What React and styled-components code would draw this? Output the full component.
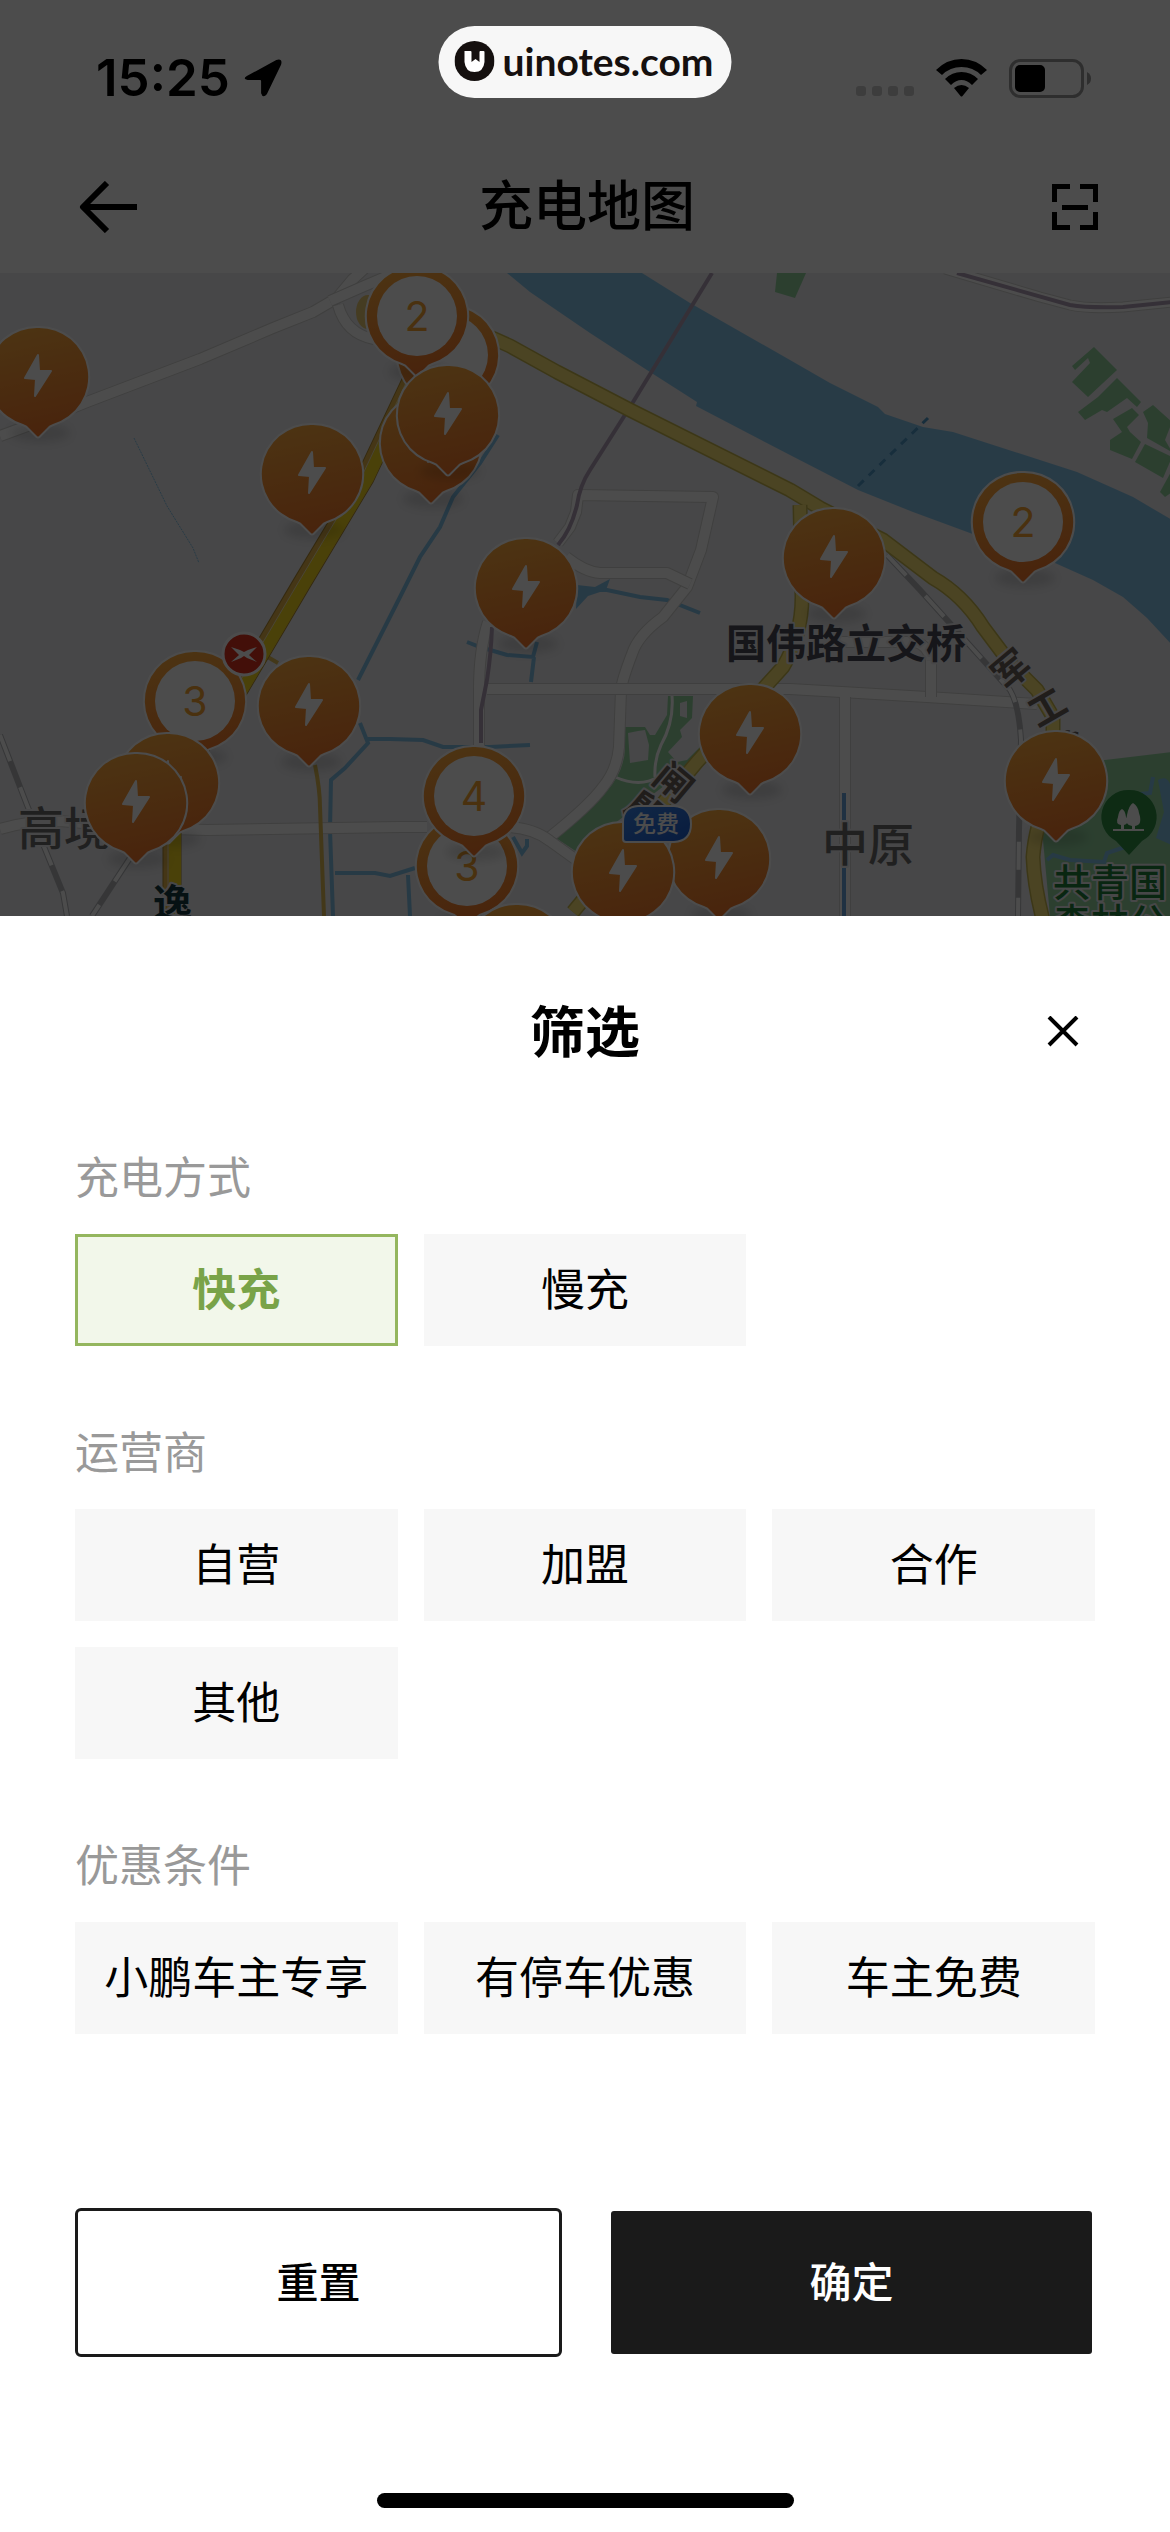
import React, { useState } from 'react';
import styled, { createGlobalStyle } from 'styled-components';

const GlobalStyle = createGlobalStyle`
  * {
    box-sizing: border-box;
  }

  body {
    margin: 0;
    background: #fff;
    color: #000;
    font-family: Inter, "Noto Sans CJK SC", sans-serif;
  }

  button {
    font-family: inherit;
    cursor: pointer;
  }
`;

const Screen = styled.div`
  min-height: 100vh;
  display: flex;
  flex-direction: column;
`;

const Scene = styled.div`
  position: relative;
  flex: 1;
  min-height: 600px;
  display: flex;
  flex-direction: column;
`;

const Dimmer = styled.div`
  position: absolute;
  inset: 0;
  background: rgba(0, 0, 0, 0.7);
`;

const StatusBar = styled.div`
  height: 141px;
  padding: 15px 78px 0 96px;
  display: flex;
  align-items: center;
  justify-content: space-between;
`;

const Clock = styled.div`
  display: flex;
  align-items: center;
  gap: 14px;
  font-size: 51px;
  line-height: 60px;
  font-weight: 600;
`;

const StatusIcons = styled.div`
  display: flex;
  align-items: center;
  gap: 22px;
`;

const SiteBadge = styled.div`
  position: absolute;
  top: 26px;
  left: 50%;
  transform: translateX(-50%);
  height: 72px;
  padding: 0 18px 2px 16px;
  border-radius: 36px;
  background: #f7f7f7;
  color: #15100f;
  display: flex;
  align-items: center;
  gap: 8px;
  font-family: Lato, sans-serif;
  font-size: 39px;
  font-weight: 700;
`;

const NavBar = styled.header`
  height: 132px;
  padding: 0 72px 0 76px;
  display: grid;
  grid-template-columns: 64px 1fr 64px;
  align-items: center;
`;

const NavTitle = styled.h1`
  margin: 0;
  text-align: center;
  font-size: 54px;
  line-height: 64px;
  font-weight: 500;
`;

const IconButton = styled.button`
  display: flex;
  align-items: center;
  justify-content: ${(props) => props.$align || 'center'};
  width: 64px;
  height: 64px;
  padding: 0;
  border: none;
  background: none;
  color: #000;
`;

const MapArea = styled.div`
  flex: 1;
  min-height: 0;
  overflow: hidden;
  background: #ededf0;

  svg {
    display: block;
    width: 100%;
    height: 100%;
  }
`;

const Sheet = styled.section`
  background: #fff;
  padding: 76px 75px 24px;
`;

const SheetHeader = styled.div`
  display: grid;
  grid-template-columns: 64px 1fr 64px;
  align-items: center;
  height: 80px;
  margin-bottom: 78px;
`;

const SheetTitle = styled.h2`
  grid-column: 2;
  margin: 0;
  text-align: center;
  font-size: 55px;
  line-height: 80px;
  font-weight: 700;
`;

const Groups = styled.div`
  display: flex;
  flex-direction: column;
  gap: 79px;
`;

const GroupLabel = styled.h3`
  margin: 0 0 28px;
  color: #999;
  font-size: 44px;
  line-height: 56px;
  font-weight: 400;
`;

const ChipGrid = styled.div`
  display: grid;
  grid-template-columns: repeat(3, 1fr);
  gap: 26px;
`;

const Chip = styled.button`
  height: 112px;
  padding: 0;
  border: 3px solid ${(props) => (props.$active ? '#94b65e' : '#f7f7f7')};
  background: ${(props) => (props.$active ? '#f2f7ea' : '#f7f7f7')};
  color: ${(props) => (props.$active ? '#79a348' : '#000')};
  font-size: 44px;
  line-height: 56px;
  font-weight: ${(props) => (props.$active ? 700 : 400)};
  white-space: nowrap;
`;

const Actions = styled.div`
  display: grid;
  grid-template-columns: 1fr 1fr;
  gap: 46px;
  margin-top: 174px;
`;

const ActionButton = styled.button`
  height: 149px;
  padding: 0;
  border: 3px solid ${(props) => (props.$primary ? 'transparent' : '#1a1a1a')};
  border-radius: 6px;
  background: ${(props) => (props.$primary ? '#1a1a1a' : '#fff')};
  background-clip: padding-box;
  color: ${(props) => (props.$primary ? '#fff' : '#000')};
  font-size: 42px;
  line-height: 56px;
  font-weight: 500;
`;

const HomeIndicator = styled.div`
  width: 417px;
  max-width: 60%;
  height: 15px;
  margin: 136px auto 0;
  border-radius: 8px;
  background: #000;
`;

const groups = [
  { key: 'mode', label: '充电方式', options: ['快充', '慢充'] },
  { key: 'operator', label: '运营商', options: ['自营', '加盟', '合作', '其他'] },
  { key: 'discount', label: '优惠条件', options: ['小鹏车主专享', '有停车优惠', '车主免费'] },
];

// drawn back to front
const pins = [
  { x: 38, y: 377 },
  { x: 312, y: 474 },
  { x: 448, y: 355, count: ' ' },
  { x: 431, y: 443 },
  { x: 417, y: 316, count: '2' },
  { x: 448, y: 415 },
  { x: 526, y: 588 },
  { x: 834, y: 558 },
  { x: 1023, y: 522, count: '2' },
  { x: 195, y: 701, count: '3' },
  { x: 309, y: 706 },
  { x: 168, y: 783 },
  { x: 136, y: 803 },
  { x: 467, y: 866, count: '3' },
  { x: 474, y: 796, count: '4' },
  { x: 517, y: 954 },
  { x: 750, y: 734 },
  { x: 719, y: 859 },
  { x: 623, y: 872 },
  { x: 1056, y: 781 },
];

const Pin = ({ x, y, count }) => (
  <g transform={`translate(${x} ${y})`}>
    <ellipse cx="2" cy="56" rx="30" ry="9" fill="#000" opacity="0.12" filter="url(#soft)" />
    <path
      d="M0 -49A49 49 0 0 1 15 47Q11 48 8 52L1 59Q0 60 -1 59L-8 52Q-11 48 -15 47A49 49 0 0 1 0 -49Z"
      fill="url(#pinFill)"
      stroke="#fff"
      strokeWidth="4"
      paintOrder="stroke"
    />
    {count ? (
      <>
        <circle r="40" fill="#fff" />
        <text y="15" textAnchor="middle" fontSize="41" fill="#f7a532">{count}</text>
      </>
    ) : (
      <path
        d="M0 -22L1 -6H13L-3 19L-2 2L-13 1Z"
        fill="#fff"
        stroke="#fff"
        strokeWidth="2"
        strokeLinejoin="round"
      />
    )}
  </g>
);

const Road = ({ d, width = 10 }) => (
  <>
    <path d={d} fill="none" stroke="#d4d4d2" strokeWidth={width + 2} strokeLinejoin="round" />
    <path d={d} fill="none" stroke="#fff" strokeWidth={width} strokeLinejoin="round" />
  </>
);

const YellowRoad = ({ d }) => (
  <>
    <path d={d} fill="none" stroke="#c9b84e" strokeWidth="15" strokeLinejoin="round" />
    <path d={d} fill="none" stroke="#fbe477" strokeWidth="12" strokeLinejoin="round" />
  </>
);

const Highway = ({ d }) => (
  <>
    <path d={d} fill="none" stroke="#b08a33" strokeWidth="19" />
    <path d={d} fill="none" stroke="#e8b64c" strokeWidth="17" />
    <path d={d} fill="none" stroke="#f7d91f" strokeWidth="12" transform="translate(3 0)" />
    <path d={d} fill="none" stroke="#f3e6b0" strokeWidth="1" transform="translate(-4 0)" />
  </>
);

const Rail = ({ d }) => (
  <>
    <path d={d} fill="none" stroke="#b4b6ba" strokeWidth="6" />
    <path d={d} fill="none" stroke="#fff" strokeWidth="4" strokeDasharray="28 28" />
  </>
);

const roads = [
  'M0 436L30 425L87 402L200 359L273 328L313 312L337 298L352 280L365 268',
  'M330 301L362 287L395 273',
  'M338 305Q346 334 374 339',
  'M558 543L570 527L576 512L578 495L713 497L701 550L687 587L663 617Q638 635 632 654Q622 680 621 690L619 747Q617 770 603 787Q590 805 550 837',
  'M566 557Q585 572 600 573H667L690 584',
  'M488 622Q479 650 479 690V750',
  'M487 689H790L927 697L1037 704',
  'M845 697V916',
  'M931 640V697',
  'M840 642H915Q928 645 931 660',
  'M0 829Q25 821 60 821L140 828L207 830L400 827H427',
  'M510 827Q535 829 550 841L575 859',
];

const greens = [
  'M777 273H806L795 298L775 292Z',
  'M1094 347L1117 370L1088 397L1072 382L1090 363L1088 358L1075 370L1072 366Z',
  'M1117 378L1141 402L1137 407L1127 398L1107 412L1102 410L1085 420L1078 412L1098 397Z',
  'M1132 408L1139 415L1127 427L1130 432L1141 442L1132 459L1110 450V440L1122 432L1113 419Z',
  'M1153 405L1172 422L1165 440L1172 452L1147 438L1148 423L1143 412Z',
  'M1145 444L1172 457L1163 478L1135 462Z',
  'M1172 470L1160 492L1165 497L1172 492Z',
  'M625 727H645L650 735H655L667 715L668 696H693L692 718L680 730L682 737L668 752L677 762L687 760L700 747L706 754L577 852L556 838Q600 805 617 777Q625 762 625 747Z',
  'M1045 765L1105 760L1172 752V916H1050L1043 840Z',
];

const streams = [
  'M498 435L480 463L453 497L440 527L420 557L400 597L358 680',
  'M360 723L368 743L345 768L331 780L330 830L333 916',
  'M368 739H390L423 740L443 747H490L530 745',
  'M335 873H375L390 876L415 868M408 875L410 916',
  'M577 602L590 590L607 590L640 597L667 600L700 613',
  'M467 642L480 647L507 655L533 657L537 642M534 657L531 682',
  'M513 837L522 853L527 846V839',
  'M1047 860L1053 855L1070 860L1104 862L1107 853L1125 847M1153 777L1150 793L1120 796',
];

const ChargeMap = () => (
  <svg
    viewBox="0 273 1170 643"
    preserveAspectRatio="xMidYMin slice"
    fontFamily='Inter, "Noto Sans CJK SC", sans-serif'
    role="img"
    aria-label="充电地图"
  >
    <defs>
      <linearGradient id="pinFill" x1="0.4" y1="0" x2="0.6" y2="1">
        <stop offset="0" stopColor="#ffac3f" />
        <stop offset="1" stopColor="#f4772b" />
      </linearGradient>
      <linearGradient id="freeFill" x1="0" y1="0" x2="1" y2="1">
        <stop offset="0" stopColor="#3a86ea" />
        <stop offset="1" stopColor="#1d5cd0" />
      </linearGradient>
      <filter id="soft" x="-50%" y="-100%" width="200%" height="300%">
        <feGaussianBlur stdDeviation="5" />
      </filter>
    </defs>

    {greens.map((d) => <path key={d} d={d} fill="#93d49f" />)}
    <path d="M628 733L638 731L645 730L649 745L648 760L630 763Z M680 703L687 701V718L680 716Z" fill="#ededf0" />
    <path d="M672 696Q674 722 661 745Q654 760 655 777M615 777Q640 788 658 777" fill="none" stroke="#fff" strokeWidth="3" />
    <path
      d="M507 273L530 292L590 333L650 372L697 402L696 406L790 455L858 490L913 512L970 533L1055 563L1093 580L1123 597L1147 618L1172 645V520L1133 497L1077 472L953 432L923 427L885 414L878 407L830 383L790 360L690 303L642 273Z"
      fill="#88c6ec"
    />
    <path d="M858 486L928 418" stroke="#4f99c9" strokeWidth="3" strokeDasharray="8 7" />
    <path d="M134 438L167 506L193 548L199 563" fill="none" stroke="#88c6ec" strokeWidth="1" strokeDasharray="2 1" />
    {streams.map((d) => <path key={d} d={d} fill="none" stroke="#82c1e8" strokeWidth="4" />)}
    <path d="M577 585L595 587L610 579L606 590L588 596L576 609Z M1158 780Q1172 772 1172 800V845L1156 838L1164 812Z" fill="#82c1e8" />

    {roads.map((d) => <Road key={d} d={d} />)}
    <path d="M844 793V820M844 868V916" stroke="#6aa4dc" strokeWidth="4" />

    <Road d="M945 269L1040 297L1070 305Q1087 309 1123 307L1172 302" width={9} />
    <path
      d="M712 273L630 407L590 470Q580 485 577 505Q571 530 558 545M492 627Q491 655 487 680L481 710V743M957 273L1070 305Q1087 308 1123 307L1172 302"
      fill="none"
      stroke="#b3a0b9"
      strokeWidth="4"
    />

    <Rail d="M887 555L920 590L947 620L1010 690Q1019 705 1021 740L1019 830L1018 916" />
    <Rail d="M0 735L27 805L63 893L67 916" />
    <Rail d="M130 858L92 916" />
    <path d="M315 765Q320 790 320 807L324 916M266 656L278 663" fill="none" stroke="#dfbd55" strokeWidth="4" />
    <ellipse cx="368" cy="312" rx="12" ry="17" fill="#e8c873" />
    <YellowRoad d="M490 337L510 346L557 372L630 410L790 490L820 508L883 540L933 578Q963 595 983 627L1010 663L1037 690L1053 717V780Q1035 827 1033 857Q1034 885 1043 920" />
    <YellowRoad d="M800 505L802 597Q802 635 783 667L697 762L573 912" />
    <Highway d="M418 366L365 478L302 583L240 688L172 790V920" />

    <g fontWeight="500" paintOrder="stroke" stroke="#ededf0" strokeWidth="4" strokeLinejoin="round">
      <text x="726" y="658" fontSize="40" fill="#4a4c57" fontWeight="700">国伟路立交桥</text>
      <text x="18" y="845" fontSize="46" fill="#6d6d6d">高境</text>
      <text x="822" y="861" fontSize="46" fill="#6d6d6d">中原</text>
      <text x="153" y="917" fontSize="39" fill="#143a41" fontWeight="700">逸</text>
      <text fontSize="38" fill="#218039">
        <tspan x="1053" y="896">共青国</tspan>
        <tspan x="1053" y="936">森林公</tspan>
      </text>
      <g fontSize="37" fill="#6d625c" textAnchor="middle" fontWeight="700">
        <text transform="translate(674 782) rotate(40)" y="14">闸</text>
        <text transform="translate(646 811) rotate(40)" y="14">殷</text>
        <text transform="translate(1011 669) rotate(-40)" y="14">军</text>
        <text transform="translate(1047 707) rotate(-30)" y="14">工</text>
        <text transform="translate(1066 748) rotate(-12)" y="14">路</text>
      </g>
    </g>

    <path d="M1129 790A27 27 0 0 1 1142 841L1129 855L1116 841A27 27 0 0 1 1129 790Z" fill="#2f8f45" />
    <path d="M1133 803Q1138 806 1139 813Q1143 825 1135 826V829H1144V831H1113V829H1121V825Q1115 824 1118 817Q1119 810 1122 809Q1125 810 1126 817Q1129 824 1124 825V829H1132V826Q1124 825 1127 815Q1129 805 1133 803Z" fill="#fff" />

    {pins.map((pin) => <Pin key={`${pin.x}-${pin.y}`} {...pin} />)}

    <g transform="translate(244 654)">
      <circle r="21" fill="#e0341f" stroke="#fff" strokeWidth="3" />
      <path d="M-13 -7L-4 -4L0 -2L4 -4L13 -7L5 1L13 8L3 4L0 2L-3 4L-13 8L-5 1Z" fill="#fff" />
    </g>
    <path
      d="M638 806H674Q691 807 691 824Q691 841 674 842H626Q623 842 623 839V822Q623 807 638 806Z"
      fill="url(#freeFill)"
      stroke="#fff"
      strokeWidth="2"
    />
    <text x="656" y="832" textAnchor="middle" fontSize="23" fontWeight="500" fill="#fff">免费</text>
  </svg>
);

const LocationIcon = () => (
  <svg width="38" height="40" viewBox="0 0 40 40" aria-hidden="true">
    <path d="M3 18L34 1Q41 -1 39 6L24 37Q20 42 18 36V23Q18 22 17 22H4Q-2 21 3 18Z" fill="#000" />
  </svg>
);

const SignalIcon = () => (
  <svg width="58" height="38" viewBox="0 0 58 38" aria-hidden="true">
    {[0, 16, 32, 48].map((x) => (
      <rect key={x} x={x} y="27" width="10" height="10" rx="3" fill="#000" opacity="0.2" />
    ))}
  </svg>
);

const WifiIcon = () => (
  <svg width="51" height="38" viewBox="0 0 51 38" aria-hidden="true">
    <path d="M0 11Q11 0 25.5 0Q40 0 51 11L45 16Q37 8 25.5 8Q14 8 6 16Z" />
    <path d="M9 20Q16 13 25.5 13Q35 13 42 20L36 26Q31 21 25.5 21Q20 21 15 26Z" />
    <path d="M18 29Q25.5 23 33 29L26.5 37Q25.5 38 24.5 37Z" />
  </svg>
);

const BatteryIcon = () => (
  <svg width="83" height="39" viewBox="0 0 83 39" aria-hidden="true">
    <rect x="1.5" y="1.5" width="72" height="36" rx="10" fill="none" stroke="#000" strokeWidth="3" opacity="0.4" />
    <rect x="6" y="6" width="30" height="27" rx="5" />
    <path d="M78 13Q82 15 82 19.5Q82 24 78 26Z" opacity="0.4" />
  </svg>
);

const BackIcon = () => (
  <svg width="62" height="52" viewBox="0 0 62 52" fill="none" stroke="#000" strokeWidth="6" aria-hidden="true">
    <path d="M31 2L7 26L31 50M7 26H61" strokeLinejoin="round" />
  </svg>
);

const ScanIcon = () => (
  <svg width="46" height="46" viewBox="0 0 46 46" fill="none" stroke="#000" strokeWidth="5" aria-hidden="true">
    <path d="M18 2.5H2.5V18M28 2.5H43.5V18M2.5 28V43.5H18M28 43.5H43.5V28M10 23.5H36" />
  </svg>
);

const CloseIcon = () => (
  <svg width="32" height="32" viewBox="0 0 32 32" stroke="#000" strokeWidth="4" aria-hidden="true">
    <path d="M2 1L30 29M30 1L2 29" />
  </svg>
);

const BrandIcon = () => (
  <svg width="40" height="40" viewBox="0 0 40 40" aria-hidden="true">
    <circle cx="20" cy="20" r="20" fill="#15100f" />
    <path d="M10 10H16Q17 10 17 11V21L21 18L25 21V11Q25 10 26 10H29Q30 10 30 11V21Q29 31 20 31Q11 31 10 21Z" fill="#fff" />
  </svg>
);

const App = () => {
  const [selected, setSelected] = useState({ mode: ['快充'], operator: [], discount: [] });

  const toggle = (key, option) => {
    setSelected((prev) => ({
      ...prev,
      [key]: prev[key].includes(option)
        ? prev[key].filter((item) => item !== option)
        : [...prev[key], option],
    }));
  };

  const handleReset = () => {
    setSelected({ mode: [], operator: [], discount: [] });
  };

  return (
    <Screen>
      <GlobalStyle />
      <Scene>
        <StatusBar>
          <Clock>
            15:25
            <LocationIcon />
          </Clock>
          <StatusIcons>
            <SignalIcon />
            <WifiIcon />
            <BatteryIcon />
          </StatusIcons>
        </StatusBar>
        <NavBar>
          <IconButton type="button" aria-label="返回" $align="flex-start"><BackIcon /></IconButton>
          <NavTitle>充电地图</NavTitle>
          <IconButton type="button" aria-label="扫码" $align="flex-end"><ScanIcon /></IconButton>
        </NavBar>
        <MapArea>
          <ChargeMap />
        </MapArea>
        <Dimmer />
        <SiteBadge>
          <BrandIcon />
          uinotes.com
        </SiteBadge>
      </Scene>

      <Sheet>
        <SheetHeader>
          <SheetTitle>筛选</SheetTitle>
          <IconButton type="button" aria-label="关闭"><CloseIcon /></IconButton>
        </SheetHeader>

        <Groups>
          {groups.map((group) => (
            <div key={group.key} role="group" aria-labelledby={`label-${group.key}`}>
              <GroupLabel id={`label-${group.key}`}>{group.label}</GroupLabel>
              <ChipGrid>
                {group.options.map((option) => {
                  const active = selected[group.key].includes(option);
                  return (
                    <Chip
                      key={option}
                      type="button"
                      $active={active}
                      aria-pressed={active}
                      onClick={() => toggle(group.key, option)}
                    >
                      {option}
                    </Chip>
                  );
                })}
              </ChipGrid>
            </div>
          ))}
        </Groups>

        <Actions>
          <ActionButton type="button" onClick={handleReset}>重置</ActionButton>
          <ActionButton type="button" $primary>确定</ActionButton>
        </Actions>
        <HomeIndicator />
      </Sheet>
    </Screen>
  );
};

export default App;
